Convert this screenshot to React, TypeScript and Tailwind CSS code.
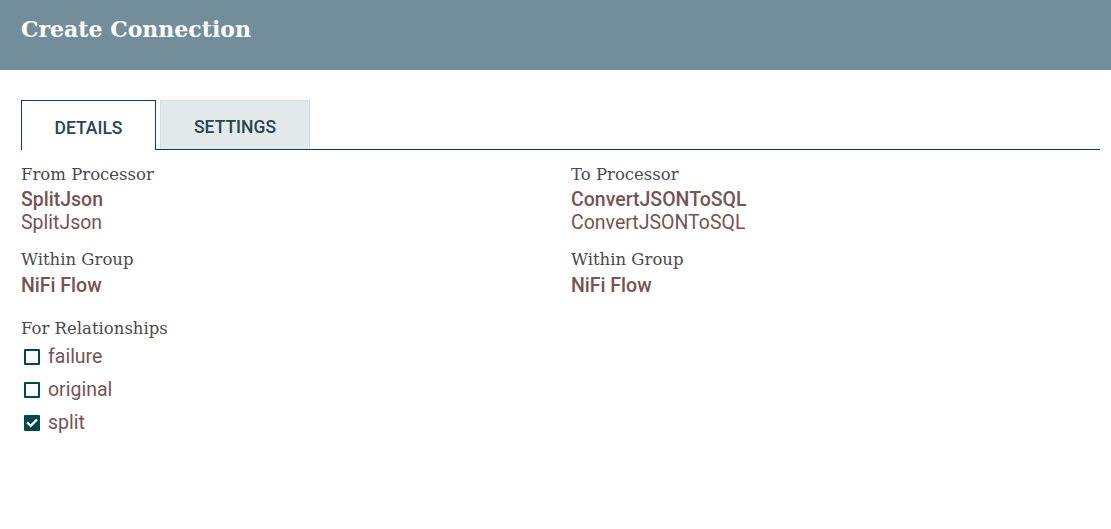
const LABEL = 'font-["DejaVu_Serif",serif] text-[16.5px] text-[#4a4a4a] leading-[22px]';
const VALUE = 'font-["Roboto",sans-serif] text-[19.5px] text-[#775351] leading-[23px]';

function Checkbox({ checked }: { checked: boolean }) {
  if (checked) {
    return (
      <span className="flex h-[16px] w-[16px] items-center justify-center rounded-[1px] bg-[#004849]">
        <svg width="12" height="12" viewBox="0 0 12 12" fill="none">
          <path d="M2 6.2l2.7 2.7L10.2 3.3" stroke="#fff" strokeWidth="2.3" strokeLinecap="square" />
        </svg>
      </span>
    );
  }
  return <span className="h-[16px] w-[16px] rounded-[1px] border-2 border-[#004849] bg-white" />;
}

function Column({ title, name, type }: { title: string; name: string; type: string }) {
  return (
    <div className="flex flex-col">
      <div className={LABEL}>{title}</div>
      <div className={`${VALUE} mt-[2px] font-medium`}>{name}</div>
      <div className={VALUE}>{type}</div>
      <div className={`${LABEL} mt-[15px]`}>Within Group</div>
      <div className={`${VALUE} mt-[3px] font-medium`}>NiFi Flow</div>
    </div>
  );
}

export default function App() {
  const relationships = [
    { name: 'failure', checked: false },
    { name: 'original', checked: false },
    { name: 'split', checked: true },
  ];

  return (
    <div className="h-[529px] w-[1111px] bg-white">
      <div className="h-[70px] bg-[#728e9b] px-[21px] pt-[14px]">
        <h1 className='font-["DejaVu_Serif",serif] text-[22px] font-bold leading-[30px] text-white'>
          Create Connection
        </h1>
      </div>

      <div className="pl-[21px] pr-[11px] pt-[30px]">
        <div className="flex items-end">
          <div className='flex h-[50px] w-[135px] items-center justify-center border border-b-0 border-[#004849] bg-white pt-[5px] font-["Roboto",sans-serif] text-[17.5px] font-medium text-[#26484d]'>
            DETAILS
          </div>
          <div className="flex flex-1 items-end border-b border-[#004849] pl-[4px]">
            <div className='flex h-[49px] w-[150px] items-center justify-center border border-b-0 border-[#d5dde0] bg-[#e3e8eb] pt-[4px] font-["Roboto",sans-serif] text-[17.5px] font-medium text-[#26484d]'>
              SETTINGS
            </div>
          </div>
        </div>

        <div className="mt-[14px] grid grid-cols-[550px_1fr]">
          <Column title="From Processor" name="SplitJson" type="SplitJson" />
          <Column title="To Processor" name="ConvertJSONToSQL" type="ConvertJSONToSQL" />
        </div>

        <div className={`${LABEL} mt-[21px]`}>For Relationships</div>
        <div className="mt-[5px] flex flex-col gap-[10px]">
          {relationships.map((r) => (
            <div key={r.name} className="flex items-center gap-[8px] pl-[3px]">
              <Checkbox checked={r.checked} />
              <span className={VALUE}>{r.name}</span>
            </div>
          ))}
        </div>
      </div>
    </div>
  );
}
